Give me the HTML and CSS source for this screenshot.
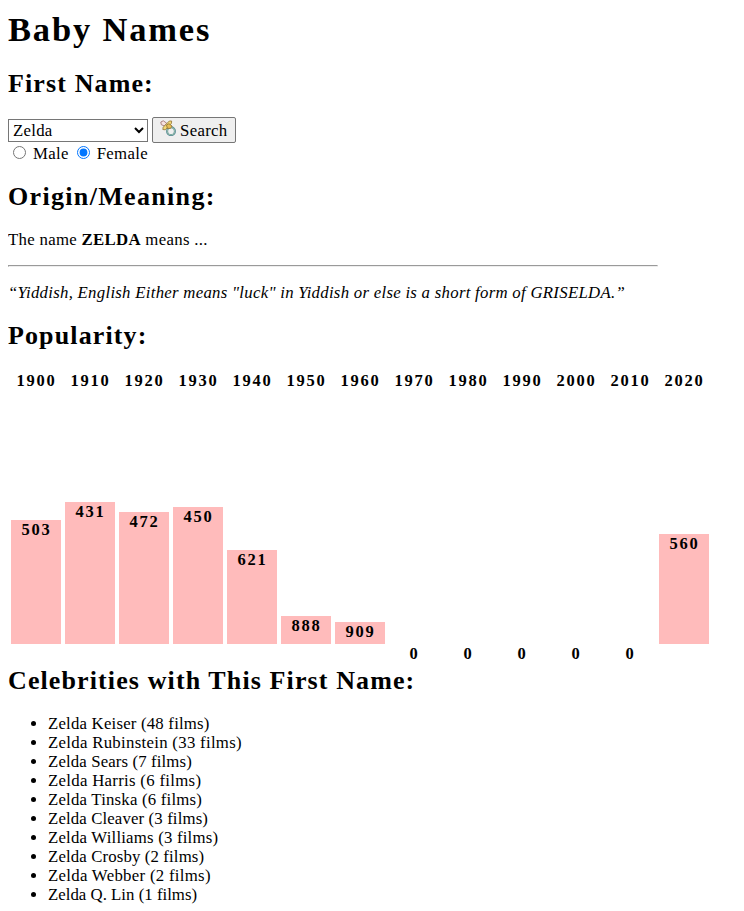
FILE: index.html
```
<!DOCTYPE html>
<html lang="en">
<head>
<meta charset="utf-8">
<title>Baby Names</title>
<link rel="stylesheet" href="styles.css">
</head>
<body>
<h1>Baby Names</h1>

<h2>First Name:</h2>
<form class="search">
  <div class="row">
    <select class="names"><option>Zelda</option></select>
    <button class="go" type="button">
      <svg class="pacifier" width="16" height="16" viewBox="0 0 16 16" fill="none">
        <circle cx="11" cy="11.2" r="3.9" stroke="#4e8290" stroke-width="2"/>
        <circle cx="11" cy="11.2" r="3.8" stroke="#a9d0b4" stroke-width=".8"/>
        <path d="M.8 2 3.3.8 6.7 3.2 4.5 6 1.3 4.7z" fill="#f6e2e2" stroke="#a57878" stroke-width=".9"/>
        <path d="M9.3 1 11.6 1 11.5 3.2 5.3 9.8 2.8 9.5 3.2 7.2z" fill="#f2d774" stroke="#927538" stroke-width=".8"/>
        <path d="M6.5 5.1 8.9 3.7 12.1 6 10.5 8.4 7.4 8.4z" fill="#e7bd57" stroke="#8b7031" stroke-width=".8"/>
      </svg>
      <span>Search</span>
    </button>
  </div>
  <div class="row genders">
    <label class="male"><input type="radio" name="gender">Male</label>
    <label class="female"><input type="radio" name="gender" checked>Female</label>
  </div>
</form>

<h2 class="origin">Origin/Meaning:</h2>
<p>The name <strong>ZELDA</strong> means ...</p>
<hr>
<p class="meaning">“Yiddish, English Either means "luck" in Yiddish or else is a short form of GRISELDA.”</p>

<h2 class="popularity">Popularity:</h2>
<div class="graph">
  <div class="year">1900</div><div class="year">1910</div><div class="year">1920</div><div class="year">1930</div><div class="year">1940</div><div class="year">1950</div><div class="year">1960</div><div class="year">1970</div><div class="year">1980</div><div class="year">1990</div><div class="year">2000</div><div class="year">2010</div><div class="year">2020</div>
  <div class="bar" style="height:124px">503</div>
  <div class="bar" style="height:142px">431</div>
  <div class="bar" style="height:132px">472</div>
  <div class="bar" style="height:137px">450</div>
  <div class="bar" style="height:94px">621</div>
  <div class="bar" style="height:28px">888</div>
  <div class="bar" style="height:22px">909</div>
  <div class="bar" style="height:0px">0</div>
  <div class="bar" style="height:0px">0</div>
  <div class="bar" style="height:0px">0</div>
  <div class="bar" style="height:0px">0</div>
  <div class="bar" style="height:0px">0</div>
  <div class="bar" style="height:110px">560</div>
</div>

<h2 class="celebs">Celebrities with This First Name:</h2>
<ul>
  <li>Zelda Keiser (48 films)</li>
  <li class="wide">Zelda Rubinstein (33 films)</li>
  <li class="snug">Zelda Sears (7 films)</li>
  <li class="wide">Zelda Harris (6 films)</li>
  <li>Zelda Tinska (6 films)</li>
  <li class="snug">Zelda Cleaver (3 films)</li>
  <li>Zelda Williams (3 films)</li>
  <li class="snug">Zelda Crosby (2 films)</li>
  <li class="wide">Zelda Webber (2 films)</li>
  <li class="tight">Zelda Q. Lin (1 films)</li>
</ul>
</body>
</html>
```

FILE: styles.css
```
body {
  margin: 0 8px;
  padding-top: 11px;
  background: #fff;
  color: #000;
  font: 16.8px/19px Georgia, "Liberation Serif", serif;
  letter-spacing: .3px;
}
h1 {
  margin: 0 0 23px;
  font-size: 34.5px;
  line-height: 36px;
  letter-spacing: 1.82px;
}
h2 {
  margin: 0 0 20px;
  font-size: 26px;
  line-height: 27px;
  letter-spacing: 1.12px;
}
.row {
  display: flex;
  align-items: center;
  gap: 4px;
  height: 26px;
}
.names {
  box-sizing: border-box;
  width: 140px;
  height: 23px;
  margin: 0;
  padding: 0;
  border: 1px solid #767676;
  border-radius: 0;
  background-color: #fff;
  color: #000;
  font: inherit;
  letter-spacing: .26px;
}
.go {
  display: flex;
  align-items: center;
  box-sizing: border-box;
  width: 84px;
  height: 26px;
  padding: 0 7px;
  gap: 4px;
  border: 1px solid #767676;
  border-radius: 2px;
  background: #efefef;
  color: #000;
  font: inherit;
  letter-spacing: .3px;
}
.pacifier {
  flex: none;
  margin-bottom: 5px;
}
.genders {
  height: 20px;
  gap: 0;
}
.genders label {
  display: flex;
  align-items: center;
}
.genders input {
  width: 13px;
  height: 13px;
  margin: 0 7px 1px 5px;
}
.female input {
  margin-left: 8px;
}
.origin {
  margin-top: 20px;
  letter-spacing: 1.33px;
}
p {
  margin: 0;
}
hr {
  width: 648px;
  margin: 16px 0;
}
.meaning {
  font-style: italic;
  letter-spacing: .275px;
}
.popularity {
  margin-top: 20px;
  margin-bottom: 22px;
}
.graph {
  display: grid;
  grid-template-columns: repeat(13, 50px);
  grid-template-rows: 19px 254px;
  column-gap: 4px;
  margin-left: 3px;
  align-items: end;
  text-align: center;
  font-weight: bold;
  font-size: 16.5px;
  letter-spacing: 1.8px;
}
.year,
.bar {
  text-indent: 1px;
}
.bar {
  background: #fbb;
}
.celebs {
  margin-top: 23px;
  letter-spacing: 1.11px;
}
ul {
  margin: 0;
  padding-left: 40px;
  letter-spacing: .2px;
}
.wide {
  letter-spacing: .295px;
}
.snug {
  letter-spacing: .13px;
}
.tight {
  letter-spacing: .02px;
}
```
